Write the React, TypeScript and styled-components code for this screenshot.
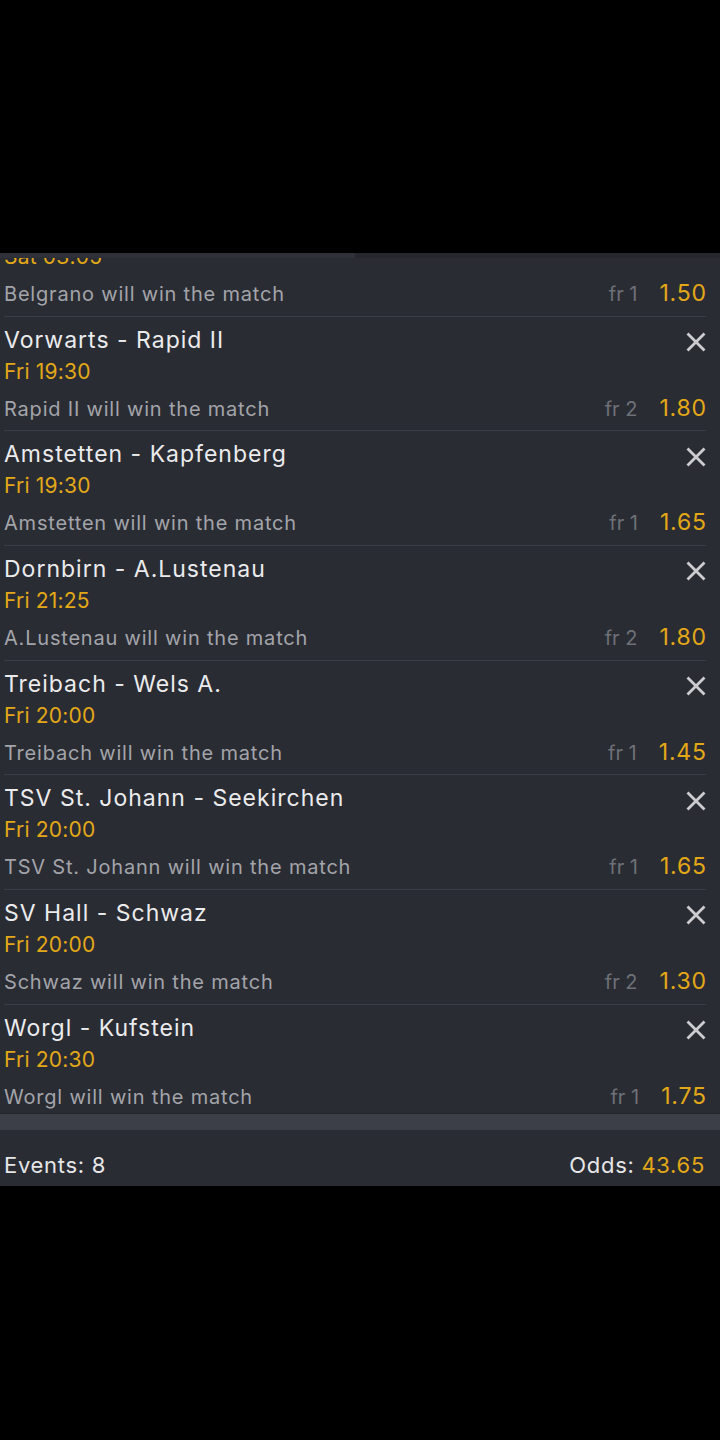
import React from "react";
import styled, { createGlobalStyle } from "styled-components";

const Global = createGlobalStyle`
  html, body { margin: 0; padding: 0; background: #000; }
  body { font-family: Inter, "Noto Sans", sans-serif; -webkit-font-smoothing: antialiased; }
`;

const Page = styled.div`
  width: 720px;
  height: 1440px;
  background: #000;
  display: flex;
  flex-direction: column;
`;

const TopSpace = styled.div`
  height: 253px;
  flex: none;
`;

const Panel = styled.section`
  background: #2a2c33;
  display: flex;
  flex-direction: column;
  flex: none;
`;

const TopStrip = styled.div`
  height: 5px;
  background: #25272d;
  display: flex;
`;

const Indicator = styled.div`
  width: 355px;
  background: #2f3139;
`;

const Viewport = styled.div`
  height: 855px;
  overflow: hidden;
`;

const List = styled.ul`
  list-style: none;
  margin: -56px 0 0 0;
  padding: 0;
`;

const Row = styled.li`
  box-sizing: border-box;
  height: 114.67px;
  margin: 0 14px 0 4px;
  padding-top: 7px;
  border-bottom: 1px solid #3a3d46;
  display: flex;
  flex-direction: column;
`;

const TitleLine = styled.div`
  display: flex;
  align-items: center;
  justify-content: space-between;
  height: 32px;
`;

const Title = styled.span`
  font-size: 23px;
  line-height: 32px;
  letter-spacing: 1px;
  color: #ebebed;
  white-space: nowrap;
`;

const Close = styled.svg`
  width: 20px;
  height: 20px;
  margin-top: 5px;
  flex: none;
`;

const DateText = styled.div`
  font-size: 21px;
  line-height: 32px;
  letter-spacing: 0.2px;
  color: #e3a817;
`;

const SelectionLine = styled.div`
  display: flex;
  align-items: baseline;
  margin-top: 3px;
  height: 36px;
`;

const Selection = styled.span`
  font-size: 20px;
  line-height: 36px;
  letter-spacing: 0.8px;
  color: #a3a4aa;
  flex: 1;
  white-space: nowrap;
`;

const Fr = styled.span`
  font-size: 20px;
  color: #6e7078;
  margin-right: 22px;
`;

const Odd = styled.span`
  font-size: 23px;
  letter-spacing: 0.8px;
  margin-right: -0.8px;
  color: #e3a817;
`;

const Band = styled.div`
  height: 16px;
  border-top: 1px solid #23252a;
  background: #3c3f48;
`;

const Footer = styled.footer`
  box-sizing: border-box;
  height: 56px;
  padding: 19px 15px 0 4px;
  display: flex;
  justify-content: space-between;
  align-items: baseline;
  line-height: 32px;
`;

const FooterLabel = styled.span`
  font-size: 22px;
  letter-spacing: 0.7px;
  color: #e6e6e8;
`;

const FooterValue = styled.span`
  color: #e3a817;
`;

type Bet = { title: string; date: string; pick: string; fr: string; odd: string };

const bets: Bet[] = [
  { title: "Guillermo Brown - Belgrano", date: "Sat 03:05", pick: "Belgrano will win the match", fr: "fr 1", odd: "1.50" },
  { title: "Vorwarts - Rapid II", date: "Fri 19:30", pick: "Rapid II will win the match", fr: "fr 2", odd: "1.80" },
  { title: "Amstetten - Kapfenberg", date: "Fri 19:30", pick: "Amstetten will win the match", fr: "fr 1", odd: "1.65" },
  { title: "Dornbirn - A.Lustenau", date: "Fri 21:25", pick: "A.Lustenau will win the match", fr: "fr 2", odd: "1.80" },
  { title: "Treibach - Wels A.", date: "Fri 20:00", pick: "Treibach will win the match", fr: "fr 1", odd: "1.45" },
  { title: "TSV St. Johann - Seekirchen", date: "Fri 20:00", pick: "TSV St. Johann will win the match", fr: "fr 1", odd: "1.65" },
  { title: "SV Hall - Schwaz", date: "Fri 20:00", pick: "Schwaz will win the match", fr: "fr 2", odd: "1.30" },
  { title: "Worgl - Kufstein", date: "Fri 20:30", pick: "Worgl will win the match", fr: "fr 1", odd: "1.75" },
];

const CloseIcon = () => (
  <Close viewBox="0 0 20 20">
    <path d="M1.5 1.5 L18.5 18.5 M18.5 1.5 L1.5 18.5" stroke="#cdcdd1" strokeWidth="2.8" fill="none" />
  </Close>
);

export default function App() {
  return (
    <Page>
      <Global />
      <TopSpace />
      <Panel>
        <TopStrip>
          <Indicator />
        </TopStrip>
        <Viewport>
          <List>
            {bets.map((b) => (
              <Row key={b.title}>
                <TitleLine>
                  <Title>{b.title}</Title>
                  <CloseIcon />
                </TitleLine>
                <DateText>{b.date}</DateText>
                <SelectionLine>
                  <Selection>{b.pick}</Selection>
                  <Fr>{b.fr}</Fr>
                  <Odd>{b.odd}</Odd>
                </SelectionLine>
              </Row>
            ))}
          </List>
        </Viewport>
        <Band />
        <Footer>
          <FooterLabel>Events: 8</FooterLabel>
          <FooterLabel>
            Odds: <FooterValue>43.65</FooterValue>
          </FooterLabel>
        </Footer>
      </Panel>
    </Page>
  );
}
